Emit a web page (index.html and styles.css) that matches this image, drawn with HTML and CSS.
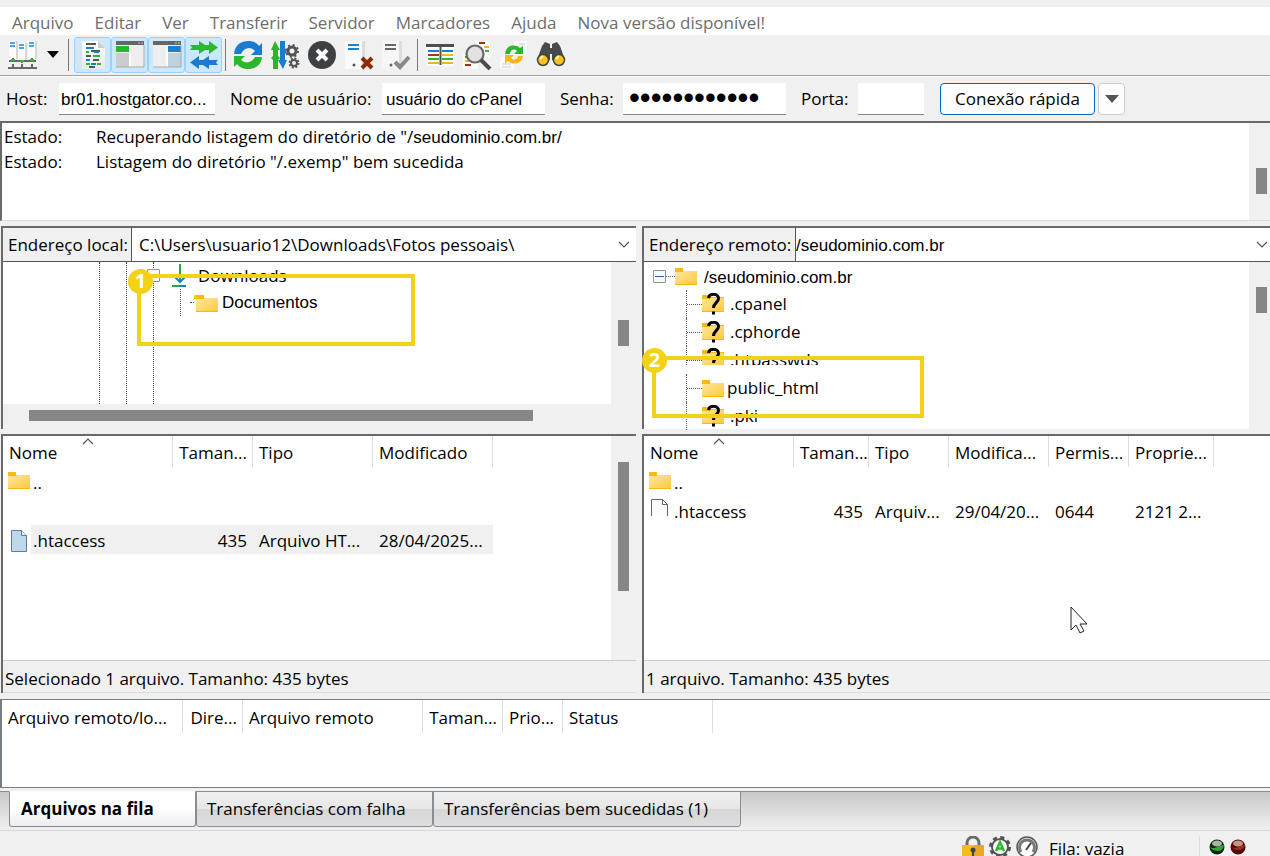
FILE: index.html
```html
<!DOCTYPE html>
<html lang="pt-BR">
<head>
<meta charset="utf-8">
<title>FileZilla</title>
<link rel="stylesheet" href="styles.css">
</head>
<body>
<svg class="sprites" aria-hidden="true">
  <defs>
    <linearGradient id="gold" x1="0" y1="0" x2="1" y2="1"><stop offset="0" stop-color="#ffe7a0"/><stop offset="1" stop-color="#fdca3e"/></linearGradient>
    <linearGradient id="paper" x1="0" y1="0" x2="0" y2="1"><stop offset="0" stop-color="#fff"/><stop offset="1" stop-color="#e9e9e9"/></linearGradient>
    <symbol id="folder" viewBox="0 0 22 17"><path d="M0 0h8v3h14v14H0z" fill="#f7b914"/><path d="M0 4h8l1-1h13v13H0z" fill="url(#gold)"/></symbol>
    <symbol id="unknown" viewBox="0 0 22 22"><path d="M0 2h8v2h14v15H0z" fill="#f7b914"/><path d="M0 6h8l1-1h13v13H0z" fill="url(#gold)"/><path d="M6.500 5C7.500 0 16.500 0 16.500 5.500c0 4-5 4.500-5 9.500" fill="none" stroke="#000" stroke-width="3"/><path d="M10 18.500h3v3h-3z"/></symbol>
    <symbol id="chevron" viewBox="0 0 12 7"><path d="M1 1l5 5 5-5" fill="none" stroke="#555" stroke-width="1.200"/></symbol>
    <symbol id="ascending" viewBox="0 0 12 7"><path d="M1 6l5-5 5 5" fill="none" stroke="#555" stroke-width="1.200"/></symbol>
  </defs>
</svg>

<nav class="menu">
  <button>Arquivo</button><button>Editar</button><button>Ver</button><button>Transferir</button><button>Servidor</button><button>Marcadores</button><button>Ajuda</button><button>Nova versão disponível!</button>
</nav>

<div class="toolbar">
  <button class="tool" aria-label="Gerenciador de sites">
    <svg viewBox="0 0 30 30" width="30" height="30"><path d="M2 1h8v18H2zM11 3h8v18h-8zM21 1h8v18h-8z" fill="#fcfcfc"/><path d="M10 1v18M19 3v18M29 1v18" stroke="#ccc" stroke-width="1.500"/><path d="M3 3h5M3 6h5M12 5h5M12 8h5M22 3h5M22 6h5" stroke="#1583d9" stroke-width="1.500"/><path d="M2 21h27M6 18v3M15 20v3M25 18v3M1 28h29M6 24v4M15 24v4M25 24v4" fill="none" stroke="#686868" stroke-width="2"/><path d="M4 20h4M13 21h4M23 20h4" stroke="#32bd32" stroke-width="2"/></svg>
  </button>
  <button class="caret" aria-label="Abrir lista de sites"><svg viewBox="0 0 12 7" width="12" height="7"><path d="M0 0h12L6 7z"/></svg></button>
  <span class="sep"></span>
  <button class="tool on" aria-label="Log de mensagens">
    <svg viewBox="0 0 30 30" width="30" height="30"><path d="M4 1h16l7 7v21H4z" fill="url(#paper)"/><path d="M20 1v7h7" fill="#ccc"/><path d="M8 4h10M13 11h9M8 16h5M15 20h6M11 27h6" stroke="#555" stroke-width="2"/><path d="M8 8h8M16 12h5M8 20h4M13 24h5" stroke="#1680d3" stroke-width="2"/><path d="M8 12h3M15 16h7M8 24h4M19 24h4" stroke="#2ab92a" stroke-width="2"/></svg>
  </button>
  <button class="tool on" aria-label="Árvore local">
    <svg viewBox="0 0 30 30" width="30" height="30"><path d="M1 1h28v26H1z" fill="#eee"/><path d="M1 1h28v4H1z" fill="#666"/><path d="M1 6h13v6H1z" fill="#23bb25"/><path d="M1 13h13v14H1z" fill="#ccc"/><path d="M15 6v21" stroke="#fff" stroke-width="2"/><path d="M23 3h2m1 0h2" stroke="#bbb"/><path d="M1 27h28V5" fill="none" stroke="#aaa"/></svg>
  </button>
  <button class="tool on" aria-label="Árvore remota">
    <svg viewBox="0 0 30 30" width="30" height="30"><path d="M1 1h28v26H1z" fill="#eee"/><path d="M1 1h28v4H1z" fill="#666"/><path d="M16 6h13v6H16z" fill="#1680d3"/><path d="M16 13h13v14H16z" fill="#bdd2dd"/><path d="M15 6v21" stroke="#fff" stroke-width="2"/><path d="M23 3h2m1 0h2" stroke="#bbb"/><path d="M1 27h28V5" fill="none" stroke="#aaa"/></svg>
  </button>
  <button class="tool on" aria-label="Fila de transferência">
    <svg viewBox="0 0 30 30" width="30" height="30"><path d="M1 5h9V1l6 4h4V1l9 6.500L20 14v-4h-4l-6 4v-4H1l2-2.500z" fill="#2db82d"/><path d="M29 20h-9v-4l-6 4h-4v-4l-9 6.500L10 29v-4h4l6 4v-4h9l-2-2.500z" fill="#1b7bd0"/></svg>
  </button>
  <span class="sep"></span>
  <button class="tool" aria-label="Atualizar">
    <svg viewBox="0 0 30 30" width="30" height="30"><path d="M1 14C2 4 9 1 15 1c4 0 8 1 11 5l3-3v12H18l4-4c-4-5-11-4-14 3z" fill="#1b7bd0"/><path d="M29 17c-1 9-8 12-14 12-4 0-8-1-11-5l-3 3V16h11l-4 4c4 4 11 3 14-3z" fill="#29b829"/></svg>
  </button>
  <button class="tool" aria-label="Processar fila">
    <svg viewBox="0 0 30 30" width="30" height="30"><path d="M3 29v-9l-2-2 2-2v-6H1l4-9 5 9H8v6l2 2-2 2v9z" fill="#2bb52b"/><path d="M10 1h5v9l2 2-2 2v6h2l-4 9-5-9h2z" fill="#1b7bd0"/><circle cx="22" cy="11" r="4" fill="none" stroke="#555" stroke-width="3"/><circle cx="22" cy="11" r="6" fill="none" stroke="#555" stroke-width="2" stroke-dasharray="2 2.700"/><circle cx="24" cy="23" r="3" fill="none" stroke="#555" stroke-width="2"/><circle cx="24" cy="23" r="4.500" fill="none" stroke="#555" stroke-width="2" stroke-dasharray="2 1.500"/></svg>
  </button>
  <button class="tool" aria-label="Cancelar">
    <svg viewBox="0 0 30 30" width="30" height="30"><circle cx="15" cy="15" r="14" fill="#3e4143"/><path d="M10 10l10 10M20 10L10 20" stroke="#fff" stroke-width="4"/></svg>
  </button>
  <button class="tool" aria-label="Desconectar">
    <svg viewBox="0 0 30 30" width="30" height="30"><path d="M1 1h17v28H1z" fill="#fafafa"/><path d="M18 1h3v26h-3z" fill="#ddd"/><path d="M4 5h11M4 9h11" stroke="#1583d9" stroke-width="2"/><circle cx="10" cy="25" r="1.500" fill="#555"/><path d="M18 18l10 10M28 18L18 28" stroke="#8d2b06" stroke-width="4"/></svg>
  </button>
  <button class="tool" aria-label="Reconectar">
    <svg viewBox="0 0 30 30" width="30" height="30"><path d="M1 1h17v28H1z" fill="#f6f6f6"/><path d="M18 1h3v26h-3z" fill="#ddd"/><path d="M4 5h11M4 9h11" stroke="#666" stroke-width="2"/><circle cx="10" cy="25" r="1.500" fill="#666"/><path d="M14 22l5 5 9-10" fill="none" stroke="#888" stroke-width="4"/></svg>
  </button>
  <span class="sep"></span>
  <button class="tool" aria-label="Comparação de diretórios">
    <svg viewBox="0 0 30 30" width="30" height="30"><path d="M2 6h27v20H2z" fill="#fdfdfd"/><path d="M1 4h28v3H1z" fill="#4f4f4f"/><path d="M3 11h11m3 0h11" stroke="#1b7bd0" stroke-width="2"/><path d="M3 15h11" stroke="#a33915" stroke-width="2"/><path d="M17 15h11M3 23h11m3 0h11" stroke="#e9b820" stroke-width="2"/><path d="M3 19h11m3 0h11" stroke="#31b231" stroke-width="2"/><path d="M15.500 7v18" stroke="#555" stroke-width="2"/></svg>
  </button>
  <button class="tool" aria-label="Filtros">
    <svg viewBox="0 0 30 30" width="30" height="30"><path d="M13 1h15v17H13zM1 14h15v15H1z" fill="#fafafa"/><path d="M17 3h6M3 25h6" stroke="#9c3210" stroke-width="2"/><path d="M22 7h5M3 21h6" stroke="#f0bb16" stroke-width="2"/><path d="M23 11h4M3 17h5" stroke="#32b432" stroke-width="2"/><circle cx="13" cy="14" r="8.500" fill="#e1e1e1" stroke="#666" stroke-width="2.200"/><path d="M19 20l9 9" stroke="#4b4b4b" stroke-width="4"/></svg>
  </button>
  <button class="tool" aria-label="Navegação sincronizada">
    <svg viewBox="0 0 30 30" width="30" height="30"><path d="M15 1h13v14H15zM1 17h14v12H1z" fill="#fafafa"/><path d="M3 24h9M3 27h9M20 4h6" stroke="#ccc"/><path d="M6 14C7 4 17 4 21 8l3-2v8h-9l3-3c-3-3-7-1-7 3z" fill="#29b829"/><path d="M24 16c-1 9-11 9-15 5l-3 3v-9h9l-3 3c3 3 7 1 7-2z" fill="#f5b61b"/></svg>
  </button>
  <button class="tool" aria-label="Localizar">
    <svg viewBox="0 0 30 30" width="30" height="30"><path d="M9 2l5 2v4h2V4l5-2 3 4 5 14-6 4-7-4v-6h-2v6l-7 4-6-4L6 6z" fill="#484b4d"/><circle cx="7" cy="20" r="5.500" fill="#f8c11b" stroke="#444" stroke-width="1.500"/><circle cx="23" cy="20" r="5.500" fill="#f8c11b" stroke="#444" stroke-width="1.500"/><path d="M4 19l3-3M20 19l3-3" stroke="#fff2a8" stroke-width="2"/></svg>
  </button>
</div>

<form class="quick">
  <label for="host">Host:</label><input id="host" value="br01.hostgator.co...">
  <label for="user">Nome de usuário:</label><input id="user" class="roomy" value="usuário do cPanel">
  <label for="pass">Senha:</label><input id="pass" class="secret" type="password" value="abcdefghijkl">
  <label for="port">Porta:</label><input id="port">
  <div class="connect"><button type="button">Conexão rápida</button><button type="button" class="more" aria-label="Histórico"><svg viewBox="0 0 14 8" width="14" height="8"><path d="M0 0h14L7 8z" fill="#555"/></svg></button></div>
</form>

<section class="log">
  <dl>
    <dt>Estado:</dt><dd>Recuperando listagem do diretório de "/<span class="arial">seudominio.com.br/</span></dd>
    <dt>Estado:</dt><dd>Listagem do diretório "/.exemp" bem sucedida</dd>
  </dl>
  <div class="gutter"><i class="thumb low"></i></div>
</section>

<main class="panes">
  <section class="pane">
    <div class="address local"><label for="local">Endereço local:</label><div class="combo"><select id="local"><option>C:\Users\usuario12\Downloads\Fotos pessoais\</option></select><svg width="12" height="7"><use href="#chevron"/></svg></div></div>
    <div class="browse">
      <div class="tree local-tree">
        <i class="guide"></i><i class="guide"></i><i class="guide"></i>
        <ul>
          <li class="downloads"><span class="expander"></span><svg viewBox="0 0 14 24" width="14" height="24"><path d="M0 22h14" stroke="#23aa46" stroke-width="2"/><path d="M7 22h7" stroke="#1684c6" stroke-width="2"/><path d="M8 0v18" stroke="#28a946" stroke-width="2"/><path d="M3 13l5 5 5-5" fill="none" stroke="#1684c6" stroke-width="2"/></svg><span>Downloads</span></li>
          <li class="docs"><i class="twig"></i><svg viewBox="0 0 25 18" width="25" height="18"><path d="M0 1h10v4H0z" fill="#f3d116"/><use href="#folder" x="2" y="1" width="22" height="17"/></svg><span class="arial">Documentos</span></li>
        </ul>
        <div class="mark one"><b>1</b></div>
      </div>
      <div class="gutter wide"><i class="thumb mid"></i></div>
    </div>
    <div class="hscroll"><i></i></div>
  </section>

  <section class="pane">
    <div class="address remote"><label for="remote">Endereço remoto:</label><div class="combo"><select id="remote" class="arial"><option>/seudominio.com.br</option></select><svg width="12" height="7"><use href="#chevron"/></svg></div></div>
    <div class="browse">
      <div class="tree remote-tree">
        <ul>
          <li class="root"><span class="expander minus"></span><i class="twig"></i><svg width="22" height="17"><use href="#folder"/></svg><span class="arial">/seudominio.com.br</span></li>
          <li><i class="twig"></i><svg width="22" height="22"><use href="#unknown"/></svg><span>.cpanel</span></li>
          <li><i class="twig"></i><svg width="22" height="22"><use href="#unknown"/></svg><span>.cphorde</span></li>
          <li class="cut"><i class="twig"></i><svg width="22" height="22"><use href="#unknown"/></svg><span>.htpasswds</span></li>
          <li class="public"><i class="twig"></i><svg width="22" height="17"><use href="#folder"/></svg><span>public_html</span></li>
          <li><i class="twig"></i><svg width="22" height="22"><use href="#unknown"/></svg><span>.pki</span></li>
        </ul>
        <div class="mark two"><b>2</b></div>
      </div>
      <div class="gutter"><i class="thumb high"></i></div>
    </div>
  </section>

  <section class="pane files">
    <div class="browse">
      <div class="sheet">
        <table>
          <colgroup><col class="w170"><col class="w80"><col class="w120"><col class="w120"></colgroup>
          <thead><tr><th class="sorted">Nome<svg width="12" height="7"><use href="#ascending"/></svg></th><th class="num">Taman...</th><th>Tipo</th><th>Modificado</th></tr></thead>
          <tbody>
            <tr><td class="name up"><div><svg width="22" height="17"><use href="#folder"/></svg>..</div></td><td></td><td></td><td></td></tr>
            <tr><td></td><td></td><td></td><td></td></tr>
            <tr class="chosen"><td class="name"><div><svg viewBox="0 0 22 22" width="22" height="22"><path d="M3.500.500h10l5 5v16h-15z" fill="#bdd7eb" stroke="#66789b"/><path d="M13.500.500v5h5" fill="#e7f0f7" stroke="#66789b"/></svg>.htaccess</div></td><td class="num">435</td><td>Arquivo HT...</td><td>28/04/2025...</td></tr>
          </tbody>
        </table>
      </div>
      <div class="gutter wide"><i class="thumb tall"></i></div>
    </div>
    <p class="summary">Selecionado 1 arquivo. Tamanho: 435 bytes</p>
  </section>

  <section class="pane files">
    <div class="browse">
      <div class="sheet">
        <table>
          <colgroup><col class="w150"><col class="w75"><col class="w80"><col class="w100"><col class="w80"><col class="w85"></colgroup>
          <thead><tr><th class="sorted">Nome<svg width="12" height="7"><use href="#ascending"/></svg></th><th class="num">Taman...</th><th>Tipo</th><th>Modifica...</th><th>Permis...</th><th>Proprie...</th></tr></thead>
          <tbody>
            <tr><td class="name up"><div><svg width="22" height="17"><use href="#folder"/></svg>..</div></td><td></td><td></td><td></td><td></td><td></td></tr>
            <tr><td class="name blank"><div><svg viewBox="0 0 22 22" width="22" height="22"><path d="M2.500 18V1.500h11l5 5V18" fill="#fcfcfc" stroke="#666"/><path d="M13.500 1.500v5h5" fill="none" stroke="#666"/></svg>.htaccess</div></td><td class="num">435</td><td>Arquiv...</td><td>29/04/20...</td><td>0644</td><td>2121 2...</td></tr>
          </tbody>
        </table>
        <svg class="pointer" viewBox="0 0 18 28" width="18" height="28"><path d="M1 1v23l5-5 4 8 4-2-4-7h7z" fill="#fff" stroke="#222"/></svg>
      </div>
    </div>
    <p class="summary">1 arquivo. Tamanho: 435 bytes</p>
  </section>
</main>

<section class="queue">
  <table>
    <colgroup><col class="w181"><col class="w60"><col class="w180"><col class="w80"><col class="w60"><col class="w150"></colgroup>
    <thead><tr><th>Arquivo remoto/lo...</th><th class="num">Dire...</th><th>Arquivo remoto</th><th class="num">Taman...</th><th>Prio...</th><th>Status</th></tr></thead>
  </table>
</section>

<div class="tabs" role="tablist">
  <button role="tab" class="tab first" aria-selected="true">Arquivos na fila</button><button role="tab" class="tab second">Transferências com falha</button><button role="tab" class="tab third">Transferências bem sucedidas (1)</button>
</div>

<footer class="status">
  <svg viewBox="0 0 22 24" width="22" height="24"><path d="M5 11V7a6 6 0 0112 0v4" fill="none" stroke="#6b6b6b" stroke-width="3"/><path d="M0 9h22v15H0z" fill="#f7bd18"/><path d="M12 9h10v15H12z" fill="#eba823"/><circle cx="11" cy="14" r="2.500" fill="#444"/><path d="M10 15h2v5h-2z" fill="#444"/></svg>
  <svg viewBox="0 0 22 22" width="22" height="22"><circle cx="11" cy="11" r="9" fill="#555"/><circle cx="11" cy="11" r="9.500" fill="none" stroke="#555" stroke-width="3" stroke-dasharray="4 3.460"/><circle cx="11" cy="11" r="7" fill="#fff"/><path d="M7 15l4-9 4 9M8.500 12.500h5" fill="none" stroke="#2db82d" stroke-width="2.500"/></svg>
  <svg viewBox="0 0 22 22" width="22" height="22"><circle cx="11" cy="11" r="10" fill="#fff" stroke="#555" stroke-width="1.500"/><path d="M5 16a7.500 7.500 0 1112 0" fill="none" stroke="#777" stroke-width="3"/><path d="M10 14l5-7" stroke="#444" stroke-width="2"/></svg>
  <span class="state">Fila: vazia</span>
  <span class="leds">
    <svg viewBox="0 0 16 16" width="16" height="16"><circle cx="8" cy="8" r="7.500" fill="#10240f"/><path d="M1 8c5 3 9-2 14-2a7 7 0 01-5 6c-4 0-7-1-9-4" fill="#31a82f"/><ellipse cx="8" cy="4.500" rx="5" ry="3" fill="#aab4aa"/></svg>
    <svg viewBox="0 0 16 16" width="16" height="16"><circle cx="8" cy="8" r="7.500" fill="#5a0505"/><path d="M1 8c5 3 9-2 14-2a7 7 0 01-5 5c-4 0-7-1-9-3" fill="#8f3524"/><ellipse cx="8" cy="4.500" rx="5" ry="3" fill="#c39488"/></svg>
  </span>
</footer>
</body>
</html>
```
FILE: styles.css
```css
* { box-sizing: border-box; }

body {
  margin: 0;
  min-height: 100vh;
  display: flex;
  flex-direction: column;
  padding-top: 7px;
  background: #f0f0f0;
  color: #000;
  font: 17px/24px "Open Sans", "Noto Sans", sans-serif;
}

button, input, select { font: inherit; color: inherit; margin: 0; border: 0; border-radius: 0; }
button { padding: 0; background: none; white-space: nowrap; }
ul, dl, dd, p { margin: 0; padding: 0; list-style: none; }
svg { display: block; flex: none; }
.sprites { position: absolute; width: 0; height: 0; }
.arial { font-family: "Liberation Sans", Arial, sans-serif; }

.menu { display: flex; gap: 21px; height: 28px; padding: 4px 12px 0; background: #fff; color: #6d6d6d; }

.toolbar { display: flex; align-items: center; height: 41px; padding: 0 4px 1px 3px; border-bottom: 1px solid #a0a0a0; }
.tool { display: flex; align-items: center; justify-content: center; width: 37px; height: 36px; }
.tool.on { background: #cce8ff; border: 1px solid #99d1ff; border-radius: 3px; }
.caret { display: flex; align-items: center; justify-content: center; width: 26px; height: 36px; }
.sep { width: 1px; height: 32px; margin: 0 3px; background: #777; }
.caret + .sep { margin-left: 2px; margin-right: 5px; }

.quick {
  display: grid;
  grid-template-columns: 59px 156px 167px 163px 78px 163px 72px 66px 1fr;
  align-items: center;
  height: 45px;
  padding-bottom: 1px;
  border-top: 1px solid #fff;
}
.quick label { padding: 1px 0 0 15px; white-space: nowrap; }
.quick label:first-child { padding-left: 6px; }
.quick input { width: 100%; height: 32px; padding: 3px 2px 0; background: #fff; border-bottom: 1px solid #868686; font-family: "Liberation Sans", Arial, sans-serif; }
.quick .roomy { padding-left: 4px; }
.quick .secret { padding: 0 6px; font-size: 31px; line-height: 31px; }
.connect { display: flex; gap: 3px; padding-left: 16px; }
.connect button { width: 155px; height: 32px; padding-top: 1px; background: #fdfdfd; border: 1px solid #0067c0; border-radius: 4px; }
.connect .more { display: flex; align-items: center; justify-content: center; width: 27px; border-color: #ccc; }

.log { display: flex; height: 100px; background: #fff; border: 2px solid #696969; border-right: 0; border-bottom: 1px solid #ddd; margin-bottom: 5px; }
.log dl { flex: 1; display: grid; grid-template-columns: 92px 1fr; grid-auto-rows: 25px; padding: 2px; }

.gutter { flex: none; width: 21px; padding-left: 7px; background: #f0f0f0; }
.gutter.wide { width: 25px; }
.thumb { display: block; width: 11px; height: 26px; background: #868686; }
.thumb.low { margin-top: 45px; }
.thumb.mid { margin-top: 58px; }
.thumb.high { margin-top: 25px; }
.thumb.tall { margin-top: 26px; height: 129px; }

.panes {
  flex: 1;
  display: grid;
  grid-template-columns: 635fr 628fr;
  grid-template-rows: auto 1fr;
  column-gap: 6px;
  row-gap: 5px;
  padding-left: 1px;
}
.pane { display: flex; flex-direction: column; min-width: 0; border: solid #696969; border-width: 2px 0 0 2px; }
.browse { flex: 1; display: flex; min-height: 0; }

.address { display: flex; height: 34px; border-bottom: 1px solid #555; }
.address label { flex: none; padding: 5px 0 0 5px; border-right: 1px solid #555; background: #f0f0f0; white-space: nowrap; }
.local label { width: 129px; }
.remote label { width: 152px; }
.combo { flex: 1; display: grid; align-items: center; background: #fff; }
.combo select { grid-area: 1 / 1; width: 100%; height: 33px; padding: 0 7px; background: none; appearance: none; }
.remote select { padding: 2px 0 0; }
.combo svg { grid-area: 1 / 1; justify-self: end; margin-right: 6px; }
.remote .combo svg { margin-right: 2px; }

.tree { position: relative; flex: 1; background: #fff; }
.tree ul { position: relative; }
.tree li { display: flex; align-items: center; height: 28px; }
.twig { flex: none; width: 15px; border-top: 1px dotted #555; }
.expander { flex: none; width: 13px; height: 13px; border: 1px solid #919191; border-radius: 1px; background: #f8f8f8; }
.minus { display: flex; align-items: center; padding: 0 1px; }
.minus::before { content: ""; flex: 1; height: 1px; background: #3c5aa0; }

.local-tree { height: 142px; }
.guide { position: absolute; top: 0; bottom: 0; left: 96px; border-left: 1px dotted #444; }
.guide + .guide { left: 123px; }
.guide + .guide + .guide { left: 150px; }
.local-tree li { height: 27px; }
.downloads { padding-left: 144px; }
.downloads svg { margin: 0 12px 0 12px; }
.local-tree .docs { margin-left: 177px; padding-left: 9px; border-left: 1px dotted #555; }
.docs .twig { width: 4px; }
.docs span { padding-left: 3px; }
.hscroll { height: 25px; padding: 6px 103px 0 26px; background: #f0f0f0; }
.hscroll i { display: block; height: 11px; background: #868686; }

.remote-tree { height: 167px; }
.remote-tree li { margin-left: 42px; border-left: 1px dotted #555; }
.remote-tree li span { padding-left: 6px; }
.remote-tree .root { margin-left: 0; padding-left: 9px; border: 0; }
.root .twig { width: 9px; }
.remote-tree .root .expander { padding: 0 1px; }
.remote-tree .root .arial { padding: 3px 0 0 7px; }
.remote-tree .cut { align-items: flex-start; height: 19px; margin-bottom: 9px; padding-top: 2px; overflow: hidden; }
.cut .twig { margin-top: 12px; }
.remote-tree .public span { padding-left: 3px; }

.mark { position: absolute; border: 4px solid #f3d116; }
.mark b { position: absolute; display: block; width: 25px; height: 25px; border-radius: 50%; background: #f3d116; color: #fff; font-size: 20px; line-height: 24px; text-align: center; }
.one { left: 134px; top: 12px; width: 278px; height: 72px; }
.one b { left: -13px; top: -9px; }
.two { left: 8px; top: 94px; width: 272px; height: 62px; }
.two b { left: -14px; top: -12px; }

.sheet { position: relative; flex: 1; min-width: 0; background: #fff; }
table { width: 0; table-layout: fixed; border-collapse: separate; border-spacing: 0; }
.w60 { width: 60px; } .w75 { width: 75px; } .w80 { width: 80px; } .w85 { width: 85px; }
.w100 { width: 100px; } .w120 { width: 120px; } .w150 { width: 150px; } .w170 { width: 170px; }
.w180 { width: 180px; } .w181 { width: 181px; }
th, td { height: 29px; padding: 2px 6px 0; text-align: left; font-weight: 400; white-space: nowrap; }
th { height: 31px; padding-right: 5px; border-right: 1px solid #ddd; }
th.sorted { position: relative; }
.sorted svg { position: absolute; top: 2px; left: 79px; }
.files + .files .sorted svg { left: 69px; }
.num { text-align: right; }
td.name { padding-left: 5px; }
.name div { display: flex; align-items: center; gap: 3px; }
.up svg { margin-bottom: 4px; }
.blank svg { margin-bottom: 6px; }
.chosen td { background: #f0f0f0; }
.chosen .name { background: linear-gradient(to right, #fff 28px, #f0f0f0 28px); }
.pointer { position: absolute; left: 426px; top: 170px; }
.summary { height: 33px; padding: 6px 2px 0; border-top: 1px solid #ccc; border-bottom: 1px solid #ddd; }

.queue { height: 89px; margin: 6px 0 3px; background: #fff; border: 1px solid #777d84; border-width: 1px 0 1px 2px; }
.queue th { height: 33px; }

.tabs { display: flex; height: 40px; padding-left: 9px; background: linear-gradient(#c8c8c8, #f0f0f0); border-top: 1px solid #898c95; border-bottom: 1px solid #d7d7d7; }
.tab { height: 36px; margin-top: -1px; padding: 0 10px; border: 1px solid #898c95; border-radius: 0 0 3px 3px; background: linear-gradient(#f0f0f0, #e6e6e6 50%, #d6d6d6 50%, #dedede); text-align: left; }
.first { width: 187px; padding-left: 11px; border-top-color: #fff; background: linear-gradient(#fff 50%, #ececec); font-weight: 700; }
.second { width: 237px; }
.third { width: 308px; }

.status { display: flex; justify-content: flex-end; gap: 5px; height: 25px; padding: 5px 24px 0 0; overflow: hidden; }
.state { width: 151px; padding: 5px 0 0 6px; line-height: 15px; }
.leds { display: flex; gap: 5px; padding: 3px 0 0 5px; border-left: 1px solid #ddd; }
.status .leds { padding-left: 9px; }
```
